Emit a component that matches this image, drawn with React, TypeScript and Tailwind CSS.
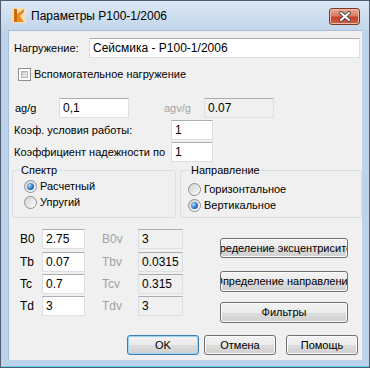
import clsx from "clsx";

const txt = "font-['Liberation_Sans',Arial,sans-serif] text-[11px] leading-[13px] text-black";

const TextBox = ({ value, ro, className }: { value: string; ro?: boolean; className?: string }) => (
  <div
    className={clsx(
      "h-[20px] flex items-center pl-[3px] border border-[#dbdfe6] border-t-[#abadb3]",
      ro ? "bg-[#f0f0f0]" : "bg-white",
      className
    )}
  >
    <span className="text-[12px] leading-none">{value}</span>
  </div>
);

const Btn = ({ label, className, def }: { label: string; className?: string; def?: boolean }) => (
  <div
    className={clsx(
      "flex items-center justify-center overflow-hidden whitespace-nowrap rounded-[3px] border bg-[linear-gradient(#f2f2f2_0%,#ebebeb_50%,#dddddd_50%,#cfcfcf_100%)]",
      def
        ? "border-[#3c7fb1] shadow-[inset_0_0_0_1px_#9ad6f4]"
        : "border-[#707070] shadow-[inset_0_0_0_1px_#fbfbfb]",
      className
    )}
  >
    {label}
  </div>
);

const Radio = ({ checked }: { checked?: boolean }) => (
  <div className="w-[13px] h-[13px] rounded-full border border-[#8e8f8f] bg-[linear-gradient(135deg,#d2d2d2,#fdfdfd)] flex items-center justify-center shrink-0">
    {checked && (
      <div className="w-[7px] h-[7px] rounded-full bg-[radial-gradient(circle_at_35%_35%,#a8dcfb,#2a6bbd_60%,#184f98)]" />
    )}
  </div>
);

const CloseGlyph = () => (
  <svg width="14" height="11" viewBox="0 0 14 11">
    <path d="M3 2 L11 9 M11 2 L3 9" stroke="#5b4a48" strokeWidth="4" strokeLinecap="round" />
    <path d="M3 2 L11 9 M11 2 L3 9" stroke="#ffffff" strokeWidth="2" strokeLinecap="round" />
  </svg>
);

const AppIcon = () => (
  <svg width="14" height="15" viewBox="0 0 14 15">
    <rect x="0" y="0" width="14" height="15" fill="#f6dfb8" />
    <path d="M2 1 L5 1 L5 6 L12 1 L12 4 L8 8 L12 14 L2 14 Z" fill="#e98c1d" />
    <path d="M2 1 L5 1 L5 14 L2 14 Z" fill="#c96a0c" />
  </svg>
);

const ParamRow = ({ a, av, b, bv, mt }: { a: string; av: string; b: string; bv: string; mt: string }) => (
  <div className={clsx("flex items-center h-[20px]", mt)}>
    <span className="w-[33px] pl-[11px] text-[12px]">{a}</span>
    <TextBox value={av} className="w-[43px]" />
    <span className="ml-[17px] w-[36px] text-[12px] text-[#a3a3a3]">{b}</span>
    <TextBox value={bv} ro className="w-[45px]" />
  </div>
);

export default function App() {
  return (
    <div className={clsx("w-[370px] h-[368px] bg-[#bcd3eb] border border-[#4e5c6e] flex flex-col", txt)}>
      <div className="h-[29px] flex items-center bg-[linear-gradient(#dce7f4,#c3d6eb)] pl-[11px] pr-[9px]">
        <AppIcon />
        <span className="ml-[5px] text-[12px] mt-[1px]">Параметры Р100-1/2006</span>
        <div className="ml-auto mt-[1px] w-[31px] h-[17px] rounded-[3px] border border-[#7e3327] bg-[linear-gradient(#e9aa98_0%,#d97b63_45%,#c4432c_55%,#cf5f48_100%)] shadow-[inset_0_0_0_1px_#f1b9a8] flex items-center justify-center">
          <CloseGlyph />
        </div>
      </div>
      <div className="mx-[7px] h-[330px] bg-[#f0f0f0] border-l border-t border-[#a9bfd8] flex flex-col">
        <div className="flex items-center mt-[7px] h-[20px]">
          <span className="w-[80px] pl-[5px]">Нагружение:</span>
          <TextBox value="Сейсмика - Р100-1/2006" className="w-[271px]" />
        </div>
        <div className="flex items-center mt-[10px] h-[13px]">
          <div className="ml-[9px] w-[13px] h-[13px] border border-[#8e8f8f] bg-white p-[2px]">
            <div className="w-full h-full border border-[#b4b8bd] bg-[linear-gradient(135deg,#c9ccd1,#f4f4f4)]" />
          </div>
          <span className="ml-[3px]">Вспомогательное нагружение</span>
        </div>
        <div className="flex items-center mt-[17px] h-[20px]">
          <span className="w-[50px] pl-[6px]">ag/g</span>
          <TextBox value="0,1" className="w-[70px]" />
          <span className="ml-[35px] w-[40px] text-[#a3a3a3]">agv/g</span>
          <TextBox value="0.07" ro className="w-[70px] h-[19px]" />
        </div>
        <div className="flex items-center mt-[2px] h-[20px]">
          <span className="w-[162px] pl-[5px]">Коэф. условия работы:</span>
          <TextBox value="1" className="w-[42px]" />
        </div>
        <div className="flex items-center mt-[2px] h-[20px]">
          <span className="w-[162px] pl-[5px] whitespace-nowrap">Коэффициент надежности по</span>
          <TextBox value="1" className="w-[42px]" />
        </div>
        <div className="flex mt-[2px] ml-[3px] gap-[4px]">
          <fieldset className="w-[164px] h-[54px] border border-[#d5dfe5] rounded-[3px] px-[11px]">
            <legend className="ml-[-4px] px-[1px] leading-[13px]">Спектр</legend>
            <div className="flex items-center mt-[3px] gap-[3px] h-[13px]">
              <Radio checked />
              <span>Расчетный</span>
            </div>
            <div className="flex items-center mt-[3px] gap-[3px] h-[13px]">
              <Radio />
              <span>Упругий</span>
            </div>
          </fieldset>
          <fieldset className="w-[182px] h-[54px] border border-[#d5dfe5] rounded-[3px] px-[7px]">
            <legend className="ml-[2px] px-[1px] leading-[13px]">Направление</legend>
            <div className="flex items-center mt-[6px] gap-[3px] h-[13px]">
              <Radio />
              <span>Горизонтальное</span>
            </div>
            <div className="flex items-center mt-[3px] gap-[3px] h-[13px]">
              <Radio checked />
              <span>Вертикальное</span>
            </div>
          </fieldset>
        </div>
        <div className="flex mt-[11px]">
          <div className="flex flex-col w-[211px]">
            <ParamRow a="B0" av="2.75" b="B0v" bv="3" mt="" />
            <ParamRow a="Tb" av="0.07" b="Tbv" bv="0.0315" mt="mt-[3px]" />
            <ParamRow a="Tc" av="0.7" b="Tcv" bv="0.315" mt="mt-[2px]" />
            <ParamRow a="Td" av="3" b="Tdv" bv="3" mt="mt-[2px]" />
          </div>
          <div className="flex flex-col w-[128px] mt-[9px]">
            <Btn label="Определение эксцентриситета" className="h-[20px]" />
            <Btn label="Определение направления" className="h-[21px] mt-[13px]" />
            <Btn label="Фильтры" className="h-[21px] mt-[10px]" />
          </div>
        </div>
        <div className="flex mt-[12px] ml-[118px]">
          <Btn label="OK" def className="w-[72px] h-[20px]" />
          <Btn label="Отмена" className="w-[72px] h-[20px] ml-[5px]" />
          <Btn label="Помощь" className="w-[72px] h-[20px] ml-[10px]" />
        </div>
      </div>
      <div className="flex-1 border-b border-[#5fd2ea]" />
    </div>
  );
}
